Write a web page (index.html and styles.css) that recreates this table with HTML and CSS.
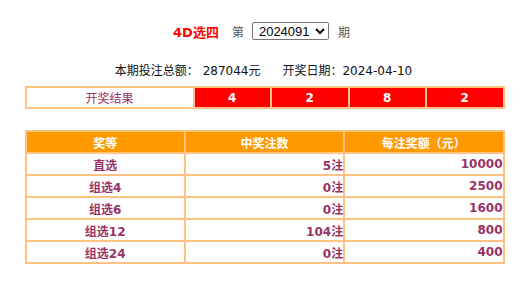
FILE: index.html
```html
<!DOCTYPE html>
<html lang="zh-CN">
<head>
<meta charset="utf-8">
<title>4D选四 开奖结果</title>
<link rel="stylesheet" href="styles.css">
</head>
<body>
<div class="page">
  <div class="issue-bar">
    <span class="game">4D选四</span>
    <span class="label">第</span>
    <select class="issue-select"><option>2024091</option></select>
    <span class="label">期</span>
  </div>
  <div class="summary">
    <span>本期投注总额： 287044元</span>
    <span>开奖日期：2024-04-10</span>
  </div>
  <table class="result">
    <tr>
      <td class="result-title">开奖结果</td>
      <td class="ball">4</td>
      <td class="ball">2</td>
      <td class="ball">8</td>
      <td class="ball">2</td>
    </tr>
  </table>
  <table class="prizes">
    <tr>
      <th>奖等</th>
      <th>中奖注数</th>
      <th>每注奖额（元）</th>
    </tr>
    <tr><td class="c">直选</td><td class="r">5注</td><td class="r">10000</td></tr>
    <tr><td class="c">组选4</td><td class="r">0注</td><td class="r">2500</td></tr>
    <tr><td class="c">组选6</td><td class="r">0注</td><td class="r">1600</td></tr>
    <tr><td class="c">组选12</td><td class="r">104注</td><td class="r">800</td></tr>
    <tr><td class="c">组选24</td><td class="r">0注</td><td class="r">400</td></tr>
  </table>
</div>
</body>
</html>
```
FILE: styles.css
```css
html, body {
  margin: 0;
  padding: 0;
  background: #ffffff;
}
body {
  font-family: "DejaVu Sans", "Noto Sans CJK SC", sans-serif;
  font-size: 12px;
  color: #222222;
}
.page {
  width: 527px;
  display: flex;
  flex-direction: column;
  align-items: center;
}
.issue-bar {
  margin-top: 22px;
  height: 18px;
  display: flex;
  align-items: center;
  padding-right: 4px;
}
.game {
  color: #ff0000;
  font-weight: bold;
  font-size: 13px;
  margin-right: 13px;
}
.label {
  color: #555555;
  font-size: 12px;
}
.issue-select {
  margin: 0 9px 0 8px;
  width: 77px;
  height: 18px;
  font-family: "Liberation Sans", sans-serif;
  font-size: 13px;
  padding: 0 0 0 2px;
  border: 1px solid #767676;
  border-radius: 2px;
  background: #ffffff;
  color: #000000;
}
.summary {
  margin-top: 23px;
  line-height: 16px;
  display: flex;
  gap: 22px;
  color: #111111;
}
table {
  border-collapse: separate;
  border-spacing: 2px;
  background: #ffc283;
  width: 480px;
  table-layout: fixed;
  margin-left: 2px;
}
td, th {
  padding: 0;
}
.result {
  margin-top: 7px;
}
.result td {
  height: 19px;
  text-align: center;
  vertical-align: middle;
}
.result-title {
  width: 166px;
  background: #ffffff;
  color: #993366;
}
.ball {
  background: #ff0000;
  color: #ffffff;
  font-weight: bold;
}
.prizes {
  margin-top: 21px;
}
.prizes th {
  height: 20px;
  background: #ff9900;
  color: #ffffff;
  font-weight: bold;
  text-align: center;
}
.prizes td {
  height: 20px;
  background: #ffffff;
  color: #993366;
  font-weight: bold;
}
.prizes td.c {
  text-align: center;
}
.prizes td.r {
  text-align: right;
}
```
